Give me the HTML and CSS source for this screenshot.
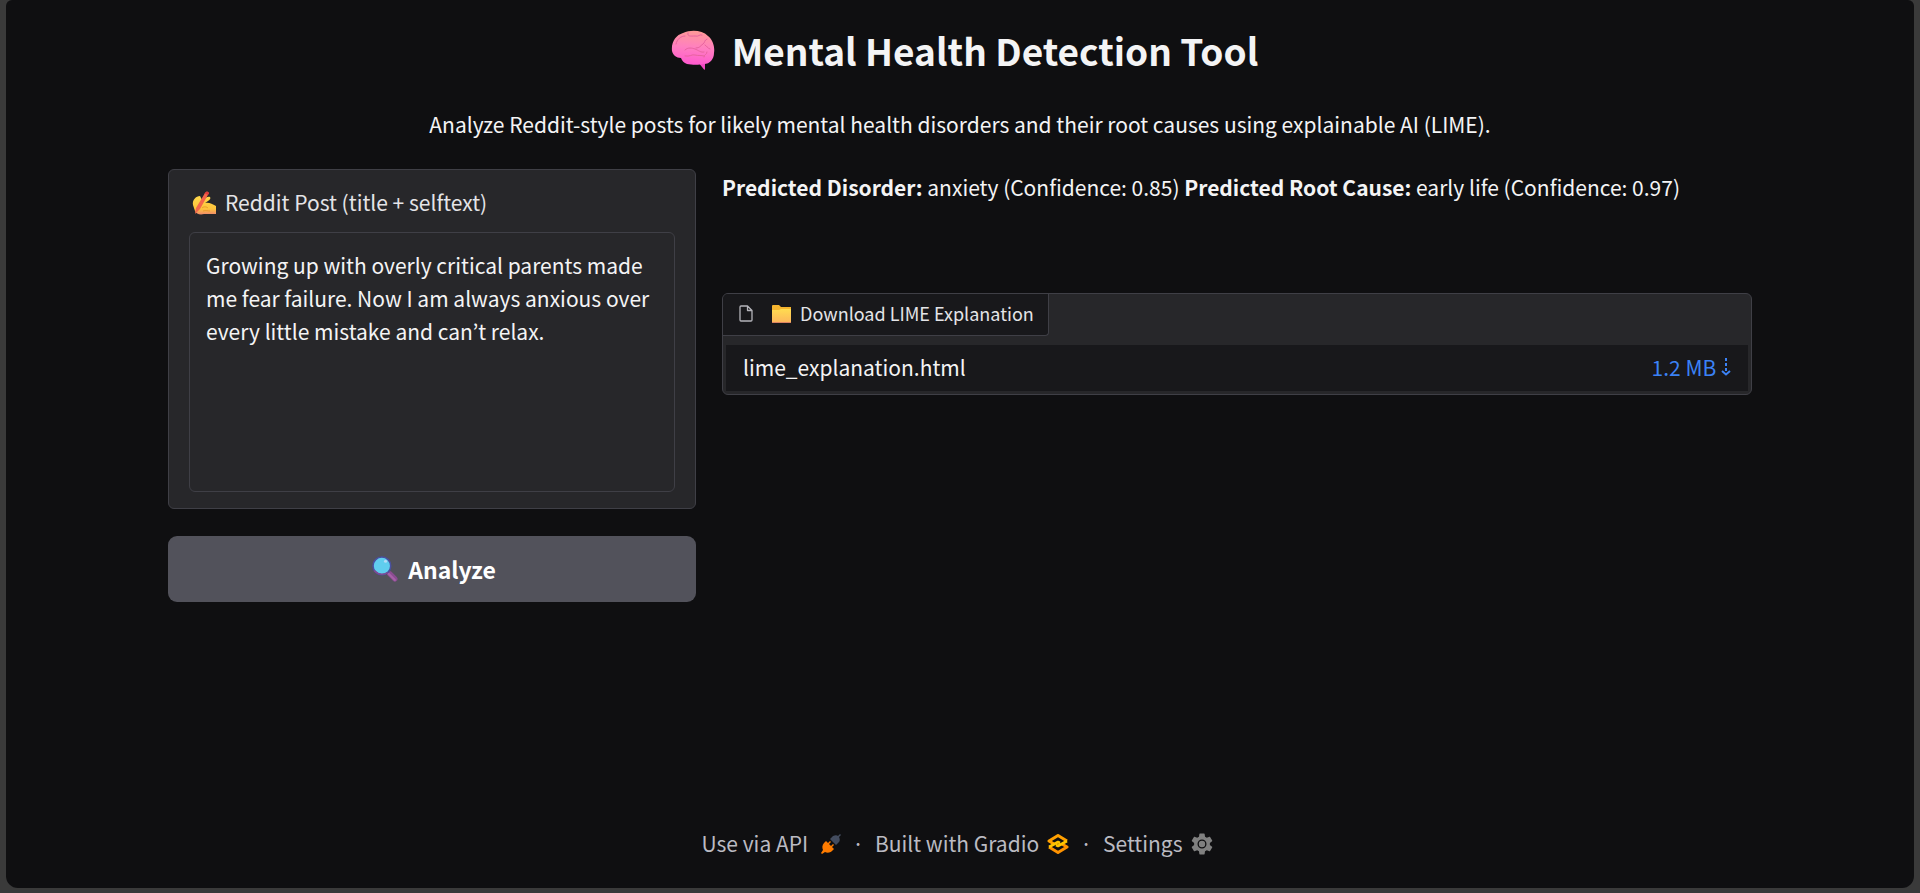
FILE: index.html
```html
<!DOCTYPE html>
<html lang="en">
<head>
<meta charset="utf-8">
<title>Mental Health Detection Tool</title>
<link rel="stylesheet" href="styles.css">
</head>
<body>
<div class="app">
  <header class="header">
    <h1 class="title">
      <svg class="icon-brain" viewBox="0 0 44 40" aria-hidden="true">
        <defs><linearGradient id="brain" x1="0.6" y1="0" x2="0.5" y2="1"><stop offset="0" stop-color="#ff9a96"/><stop offset="0.5" stop-color="#ff7fc0"/><stop offset="1" stop-color="#ff58cf"/></linearGradient></defs>
        <path d="M27 32l6 7.500q1 1 1-1V31z" fill="#f048c0"/>
        <path d="M1 21C0 12 5 5 12 3 20-.5 31 0 37 6c5 4 7 11 6 17 0 6-4 11-10 11-5 1-12 1-17 0-3-1-5-3-6-6-5 0-8-3-9-7z" fill="url(#brain)"/>
        <path d="M5 14c1-5 5-8 9-8m3-3c-1 4 3 3 7 3 4 1 4-2 7-1m5 4c-3 1-2 4-4 5-3 2-3 4-7 4m9-3c2 1 2 3 5 4M14 20c3-3 7-2 10-1s6 4 9 3m-19 4c5 1 7-2 10-1 4 1 6 0 9 1m3-4c0 3-3 2-3 5" fill="none" stroke="#e8649f" stroke-linecap="round"/>
      </svg>
      <span>Mental Health Detection Tool</span>
    </h1>
    <p class="subtitle">Analyze Reddit-style posts for likely mental health disorders and their root causes using explainable AI (LIME).</p>
  </header>
  <main class="columns">
    <section class="input-column">
      <div class="panel">
        <label class="panel-label" for="post">
          <svg class="icon-hand" viewBox="0 0 24 24" aria-hidden="true">
            <defs><linearGradient id="hand" x1="0" y1="0" x2="0" y2="1"><stop offset="0" stop-color="#ffd94a"/><stop offset="0.7" stop-color="#fdc33c"/><stop offset="1" stop-color="#f08a6a"/></linearGradient></defs>
            <path d="M1 14C0 9 4 5 8 5l2 4c3-2 6-4 8-3 1 1 0 3-2 4l-3 2c4-1 7 1 11 3v8H12c-4 1-8 0-9-3z" fill="url(#hand)"/>
            <path d="M13 2q2-3 4 0L8 18l-5 5 1-6z" fill="#f4664a"/>
            <path d="M13 2q2-3 4 0l-1 2-4-2z" fill="#e23b3b"/>
            <path d="M10 17c2-2 5-1 6 0m-5 3c3-1 5 0 7 0" stroke="#e89a2e" fill="none"/>
          </svg>
          <span>Reddit Post (title + selftext)</span>
        </label>
        <textarea class="post" id="post" spellcheck="false">Growing up with overly critical parents made me fear failure. Now I am always anxious over every little mistake and can’t relax.</textarea>
      </div>
      <button class="analyze" type="button">
        <svg class="icon-lens" viewBox="0 0 25 25" aria-hidden="true">
          <path d="M17 17l5 5" stroke="#8c4c92" stroke-width="5" stroke-linecap="round"/>
          <path d="M16 17l6 6" stroke="#a761a8" stroke-width="2" stroke-linecap="round"/>
          <circle cx="9.500" cy="9.500" r="8.500" fill="#60cdee" stroke="#49509f" stroke-width="1.500"/>
          <path d="M2 14q6 6 13 2" stroke="#824a92" stroke-width="1.500" fill="none"/>
          <circle cx="13" cy="5" r="1.500" fill="#b5dcf7"/>
        </svg>
        <span>Analyze</span>
      </button>
    </section>
    <section class="output-column">
      <p class="result"><strong>Predicted Disorder:</strong> anxiety (Confidence: 0.85) <strong>Predicted Root Cause:</strong> early life (Confidence: 0.97)</p>
      <div class="file-block">
        <div class="file-label">
          <svg class="icon-file" viewBox="0 0 14 17" aria-hidden="true"><path d="M2 1h6.500L13 5.500V15q0 1-1 1H2q-1 0-1-1V2q0-1 1-1zM8.500 1v4.500H13" fill="none" stroke="#b4b4ba" stroke-width="1.300" stroke-linejoin="round"/></svg>
          <svg class="icon-folder" viewBox="0 0 19 18" aria-hidden="true">
            <defs><linearGradient id="folder" x1="0" y1="0" x2="0" y2="1"><stop offset="0" stop-color="#ffdc50"/><stop offset="1" stop-color="#fcb55c"/></linearGradient></defs>
            <path d="M0 1q0-1 1-1h6l2 2h10v6H0z" fill="#f5b52f"/><path d="M0 5h7l2-1h10v13q0 1-1 1H1q-1 0-1-1z" fill="url(#folder)"/><path d="M0 17.500h19" stroke="#dc8362"/>
          </svg>
          <span>Download LIME Explanation</span>
        </div>
        <table class="files">
          <tbody>
            <tr>
              <td class="file-name">lime_explanation.html</td>
              <td class="file-size"><a href="#download">1.2 MB <svg class="icon-arrow" viewBox="0 0 10 18" role="img" aria-label="download"><path d="M5 0v14" stroke="currentColor" stroke-width="2" stroke-dasharray="3 2"/><path d="M1 13l4 3.500L9 13" fill="none" stroke="currentColor" stroke-width="2"/></svg></a></td>
            </tr>
          </tbody>
        </table>
      </div>
    </section>
  </main>
  <footer class="footer">
    <button class="footer-item" type="button">Use via API
      <svg class="icon-plug" viewBox="0 0 20 20" aria-hidden="true">
        <path d="M9 5l3-3c2-1 4-1 5 0l2-2 1 1-2 2c1 2 1 4 0 5l-3 3z" fill="#434c5f"/>
        <path d="M3 9l2-2 2 2 2-2 1 1-2 2 2 2 2-2 1 1-2 2 2 2-2 2c-2 2-5 2-7 1l-3 2-1-1 2-3c-1-2-1-5 1-7z" fill="#ff7c00"/>
      </svg>
    </button>
    <span class="dot">·</span>
    <a class="footer-item" href="#gradio">Built with Gradio
      <svg class="icon-gradio" viewBox="0 0 22 20" aria-hidden="true">
        <path d="M7 10L2 7l9-5.500L20 7" fill="none" stroke="#ffa000" stroke-width="3" stroke-linejoin="round"/>
        <path d="M15 10l5 3-9 5.500L2 13" fill="none" stroke="#ff9200" stroke-width="3" stroke-linejoin="round"/>
        <path d="M2 13l9-5 2 1M20 7l-9 5-2-1" fill="none" stroke="#ffc400" stroke-width="2.600" stroke-linejoin="round"/>
      </svg>
    </a>
    <span class="dot">·</span>
    <button class="footer-item" type="button">Settings
      <svg class="icon-gear" viewBox="2 2 20 20" aria-hidden="true"><path fill="#808080" d="M19.140 12.940c.04-.3.060-.610.060-.940 0-.320-.020-.640-.070-.940l2.030-1.580c.180-.140.230-.410.120-.610l-1.920-3.320c-.120-.220-.370-.290-.590-.220l-2.390.960c-.5-.380-1.030-.7-1.620-.940l-.360-2.540c-.040-.240-.240-.410-.480-.410h-3.840c-.240 0-.430.170-.470.410l-.360 2.540c-.590.240-1.130.570-1.620.940l-2.390-.960c-.220-.080-.470 0-.590.220L2.740 8.870c-.120.210-.080.470.120.610l2.030 1.580c-.050.3-.090.630-.090.940s.020.640.070.940l-2.030 1.580c-.180.140-.230.410-.120.610l1.920 3.320c.120.220.370.290.590.220l2.390-.960c.5.380 1.030.7 1.620.940l.360 2.540c.050.240.240.410.480.410h3.840c.240 0 .440-.170.470-.410l.360-2.540c.590-.240 1.130-.560 1.620-.940l2.390.960c.220.080.470 0 .590-.220l1.920-3.320c.120-.220.070-.470-.120-.610l-2.010-1.580z"/><circle cx="12" cy="12" r="3.500" fill="#808080" stroke="#0f0f11" stroke-width="1.200"/></svg>
    </button>
  </footer>
</div>
</body>
</html>
```
FILE: styles.css
```css
* {
  box-sizing: border-box;
}

body {
  margin: 0;
  min-height: 100vh;
  padding: 0 6px 5px;
  display: flex;
  background: #3a3a3a;
  color: #f4f4f5;
  font-family: "Noto Sans CJK KR", "Open Sans", sans-serif;
  font-size: 21px;
  line-height: 33px;
}

button,
textarea {
  font: inherit;
  color: inherit;
}

svg {
  flex: none;
}

.app {
  flex: 1;
  display: flex;
  flex-direction: column;
  padding: 24px 162px 28px;
  border-radius: 6px 6px 12px 12px;
  background: #0f0f11;
}

.header {
  text-align: center;
}

.title {
  display: flex;
  align-items: center;
  justify-content: center;
  gap: 17px;
  margin: 0;
  padding-left: 9px;
  font-size: 37px;
  font-weight: 600;
  line-height: 52px;
}

.icon-brain {
  width: 44px;
  height: 40px;
}

.subtitle {
  margin: 32px 0 28px;
}

.columns {
  display: grid;
  grid-template-columns: 528fr 1030fr;
  align-items: start;
  gap: 26px;
}

.input-column {
  display: flex;
  flex-direction: column;
  gap: 27px;
}

.panel {
  display: flex;
  flex-direction: column;
  gap: 13px;
  padding: 16px 20px;
  border: 1px solid #3f3f46;
  border-radius: 6px;
  background: #27272a;
}

.panel-label {
  display: flex;
  align-items: center;
  gap: 9px;
  padding-left: 3px;
  color: #e4e4e7;
}

.icon-hand {
  width: 24px;
  height: 24px;
}

.icon-lens {
  width: 26px;
  height: 26px;
}

.post {
  display: block;
  height: 260px;
  padding: 16px;
  border: 1px solid #3f3f46;
  border-radius: 6px;
  outline: none;
  resize: none;
  background: #27272a;
}

.analyze {
  display: flex;
  align-items: center;
  justify-content: center;
  gap: 10px;
  padding: 16px 16px 16px 20px;
  border: 0;
  border-radius: 9px;
  background: #52525b;
  color: #fff;
  font-size: 23px;
  font-weight: 600;
  line-height: 34px;
}

.output-column {
  display: flex;
  flex-direction: column;
  gap: 89px;
}

.result {
  margin: 2px 0 0;
}

.file-block {
  padding-bottom: 3px;
  border: 1px solid #3f3f46;
  border-radius: 6px;
  background: #27272a;
  overflow: hidden;
}

.file-label {
  display: flex;
  align-items: center;
  width: fit-content;
  padding: 3px 14px 5px 16px;
  border: 1px solid #3f3f46;
  border-width: 0 1px 1px 0;
  border-radius: 0 0 4px;
  background: #18181b;
  color: #e4e4e7;
  font-size: 18px;
}

.icon-file {
  width: 14px;
  height: 17px;
  margin-right: 19px;
}

.icon-folder {
  width: 19px;
  height: 18px;
  margin-right: 9px;
}

.files {
  width: calc(100% - 6px);
  margin: 9px 3px 0;
  border-collapse: collapse;
  background: #18181b;
}

.files td {
  padding: 6px 17px 7px;
}

.file-size {
  text-align: right;
}

.file-size a {
  color: #3b82f6;
  text-decoration: none;
}

.icon-arrow {
  width: 10px;
  height: 18px;
}

.footer {
  display: flex;
  align-items: center;
  justify-content: center;
  gap: 11px;
  margin-top: auto;
  padding-right: 6px;
  color: #bbbbc2;
}

.footer-item {
  display: flex;
  align-items: center;
  gap: 8px;
  padding: 0;
  border: 0;
  background: none;
  color: inherit;
  text-decoration: none;
}

.icon-plug {
  width: 20px;
  height: 20px;
  margin-left: 5px;
}

.icon-gradio {
  width: 22px;
  height: 20px;
}

.icon-gear {
  width: 22px;
  height: 22px;
}
```
